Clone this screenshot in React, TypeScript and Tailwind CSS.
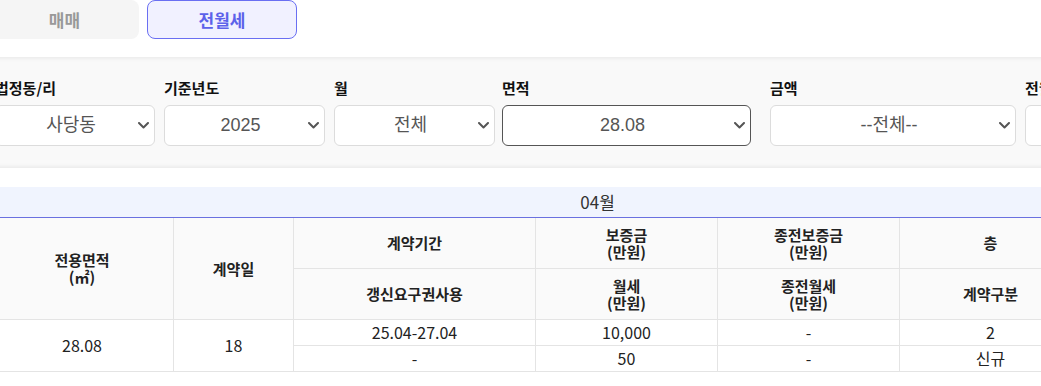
import React from "react";

const kr = { fontFamily: '"Noto Sans CJK KR", "Noto Sans", sans-serif' };
const latin = { fontFamily: '"Liberation Sans", "Noto Sans CJK KR", sans-serif' };

const Chevron = () => (
  <svg width="11" height="7" viewBox="0 0 11 7" className="shrink-0">
    <polyline points="1,1 5.5,5.5 10,1" fill="none" stroke="#555" strokeWidth="2" strokeLinecap="round" strokeLinejoin="round" />
  </svg>
);

const filters = [
  { label: "법정동/리", value: "사당동", col: "w-[169px]", box: "w-[160px]" },
  { label: "기준년도", value: "2025", col: "w-[170px]", box: "w-[161px]" },
  { label: "월", value: "전체", col: "w-[168px]", box: "w-[161px]" },
  { label: "면적", value: "28.08", col: "w-[268px]", box: "w-[249px]", focus: true },
  { label: "금액", value: "--전체--", col: "w-[255px]", box: "w-[246px]" },
  { label: "전월세구분", value: "전체", col: "w-[170px]", box: "w-[160px]" },
];

const FilterSelect = ({ value, box, focus }: { value: string; box: string; focus?: boolean }) => (
  <div
    className={`${box} h-[41px] bg-white rounded-[6px] flex items-center pl-2 pr-[5px] ${
      focus ? "border-[1.5px] border-[#555]" : "border border-[#dcdcdc]"
    }`}
  >
    <span className="flex-1 text-center text-[18px] text-[#555]" style={latin}>
      {value}
    </span>
    <Chevron />
  </div>
);

const th = "border border-[#e4e4e4] bg-[#fafafa] text-[15px] font-bold text-[#222] leading-[17px] text-center align-middle";
const td = "border border-[#e4e4e4] bg-white text-[16px] font-normal text-[#222] text-center align-middle h-[26px] leading-[18px]";

export default function App() {
  return (
    <div className="w-[1041px] h-[386px] overflow-hidden bg-white" style={kr}>
      <div className="w-[1240px] -ml-[10px]">
        {/* tabs */}
        <div className="flex gap-2 h-[57px] items-start">
          <div className="w-[149px] h-[39px] rounded-[8px] bg-[#f5f5f5] flex items-center justify-center text-[17px] font-semibold text-[#999]">
            매매
          </div>
          <div className="w-[150px] h-[39px] rounded-[8px] bg-[#f1f1ff] border border-[#6a6ff2] flex items-center justify-center text-[17px] font-semibold text-[#5c62ea]">
            전월세
          </div>
        </div>

        {/* filters */}
        <div className="h-[111px] bg-[#f9f9f9] shadow-[inset_0_3px_4px_-2px_rgba(0,0,0,0.08),inset_0_-3px_4px_-2px_rgba(0,0,0,0.08)] pt-[20px] pl-[5px] flex">
          {filters.map((f) => (
            <div key={f.label} className={`${f.col} shrink-0 flex flex-col gap-[7px]`}>
              <div className="text-[15px] font-bold text-[#111] leading-[21px] whitespace-nowrap">{f.label}</div>
              <FilterSelect value={f.value} box={f.box} focus={f.focus} />
            </div>
          ))}
        </div>

        {/* table */}
        <table className="mt-[19px] w-[1214px] border-collapse table-fixed">
          <colgroup>
            <col className="w-[183px]" />
            <col className="w-[120px]" />
            <col className="w-[242px]" />
            <col className="w-[182px]" />
            <col className="w-[182px]" />
            <col className="w-[182px]" />
            <col className="w-[123px]" />
          </colgroup>
          <thead>
            <tr>
              <th colSpan={7} className="h-[30px] bg-[#f0f4fe] border-b border-[#6a70e0] text-[17px] font-normal text-[#333] text-center">
                04월
              </th>
            </tr>
            <tr className="h-[51px]">
              <th rowSpan={2} className={`${th} border-t-0`}>
                전용면적
                <br />
                (㎡)
              </th>
              <th rowSpan={2} className={`${th} border-t-0`}>계약일</th>
              <th className={`${th} border-t-0`}>계약기간</th>
              <th className={`${th} border-t-0`}>
                보증금
                <br />
                (만원)
              </th>
              <th className={`${th} border-t-0`}>
                종전보증금
                <br />
                (만원)
              </th>
              <th className={`${th} border-t-0`}>층</th>
              <th className={`${th} border-t-0`}>건축년도</th>
            </tr>
            <tr className="h-[51px]">
              <th className={th}>갱신요구권사용</th>
              <th className={th}>
                월세
                <br />
                (만원)
              </th>
              <th className={th}>
                종전월세
                <br />
                (만원)
              </th>
              <th className={th}>계약구분</th>
              <th className={th}>주택유형</th>
            </tr>
          </thead>
          <tbody>
            <tr>
              <td rowSpan={2} className={td}>28.08</td>
              <td rowSpan={2} className={td}>18</td>
              <td className={td}>25.04-27.04</td>
              <td className={td}>10,000</td>
              <td className={td}>-</td>
              <td className={td}>2</td>
              <td className={td}>2019</td>
            </tr>
            <tr>
              <td className={td}>-</td>
              <td className={td}>50</td>
              <td className={td}>-</td>
              <td className={td}>신규</td>
              <td className={td}>오피스텔</td>
            </tr>
          </tbody>
        </table>
      </div>
    </div>
  );
}
